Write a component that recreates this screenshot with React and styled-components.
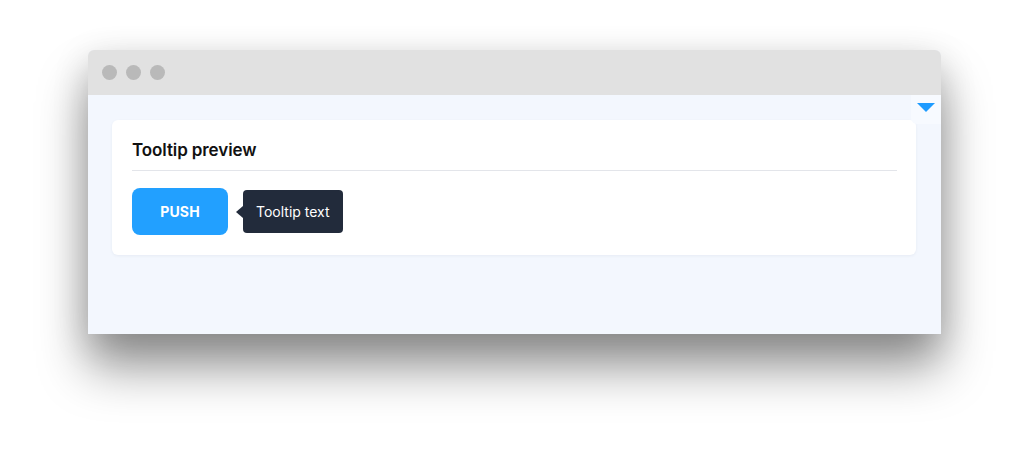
import React from "react";
import styled, { createGlobalStyle } from "styled-components";

const Global = createGlobalStyle`
  html, body {
    margin: 0;
    padding: 0;
    background: #fff;
    font-family: Inter, "Noto Sans", sans-serif;
  }
`;

const Stage = styled.div`
  width: 1028px;
  height: 460px;
  padding: 50px 0 0 88px;
  box-sizing: border-box;
  overflow: hidden;
`;

const Window = styled.div`
  width: 853px;
  height: 284px;
  border-radius: 6px 6px 0 0;
  background: #f3f7fe;
  box-shadow: 0 34px 50px rgba(0, 0, 0, 0.4), 0 10px 36px rgba(0, 0, 0, 0.16);
  display: flex;
  flex-direction: column;
  position: relative;
`;

const TitleBar = styled.div`
  height: 45px;
  background: #e1e1e1;
  border-radius: 6px 6px 0 0;
  display: flex;
  align-items: center;
  gap: 9px;
  padding-left: 14px;
  flex-shrink: 0;
`;

const Dot = styled.span`
  width: 15px;
  height: 15px;
  border-radius: 50%;
  background: #b9b9b9;
`;

const Body = styled.div`
  flex: 1;
  padding: 25px 25px 0 24px;
`;

const Toggle = styled.div`
  position: absolute;
  top: 45px;
  right: 0;
  width: 30px;
  height: 29px;
  background: #f7faff;
  border-bottom-left-radius: 6px;
  display: flex;
  justify-content: center;
  padding-top: 8px;
  box-sizing: border-box;
`;

const Card = styled.div`
  background: #fff;
  border-radius: 6px;
  box-shadow: 0 1px 3px rgba(30, 50, 90, 0.06);
  padding: 20px 19px 20px 20px;
  height: 135px;
  box-sizing: border-box;
`;

const Title = styled.h3`
  margin: 0;
  font-size: 17px;
  font-weight: 600;
  color: #111;
  padding-bottom: 10px;
  border-bottom: 1px solid #e3e5ea;
  letter-spacing: -0.1px;
`;

const Row = styled.div`
  display: flex;
  align-items: center;
  gap: 15px;
  margin-top: 17px;
`;

const Button = styled.button`
  width: 96px;
  height: 47px;
  border: none;
  border-radius: 8px;
  background: #22a0ff;
  color: #fff;
  font-family: Inter, sans-serif;
  font-size: 14px;
  font-weight: 700;
  letter-spacing: 0.2px;
`;

const Tooltip = styled.div`
  position: relative;
  background: #222b3b;
  color: #fff;
  border-radius: 4px;
  height: 43px;
  padding: 0 13px;
  display: flex;
  align-items: center;
  font-size: 14px;
  &::before {
    content: "";
    position: absolute;
    left: -7px;
    top: 50%;
    transform: translateY(-50%);
    border-style: solid;
    border-width: 6px 7px 6px 0;
    border-color: transparent #222b3b transparent transparent;
  }
`;

export default function App() {
  return (
    <>
      <Global />
      <Stage>
        <Window>
          <TitleBar>
            <Dot />
            <Dot />
            <Dot />
          </TitleBar>
          <Toggle>
            <svg width="18" height="9" viewBox="0 0 18 9">
              <path d="M0 0 H18 L9 9 Z" fill="#1e9bff" />
            </svg>
          </Toggle>
          <Body>
            <Card>
              <Title>Tooltip preview</Title>
              <Row>
                <Button>PUSH</Button>
                <Tooltip>Tooltip text</Tooltip>
              </Row>
            </Card>
          </Body>
        </Window>
      </Stage>
    </>
  );
}
